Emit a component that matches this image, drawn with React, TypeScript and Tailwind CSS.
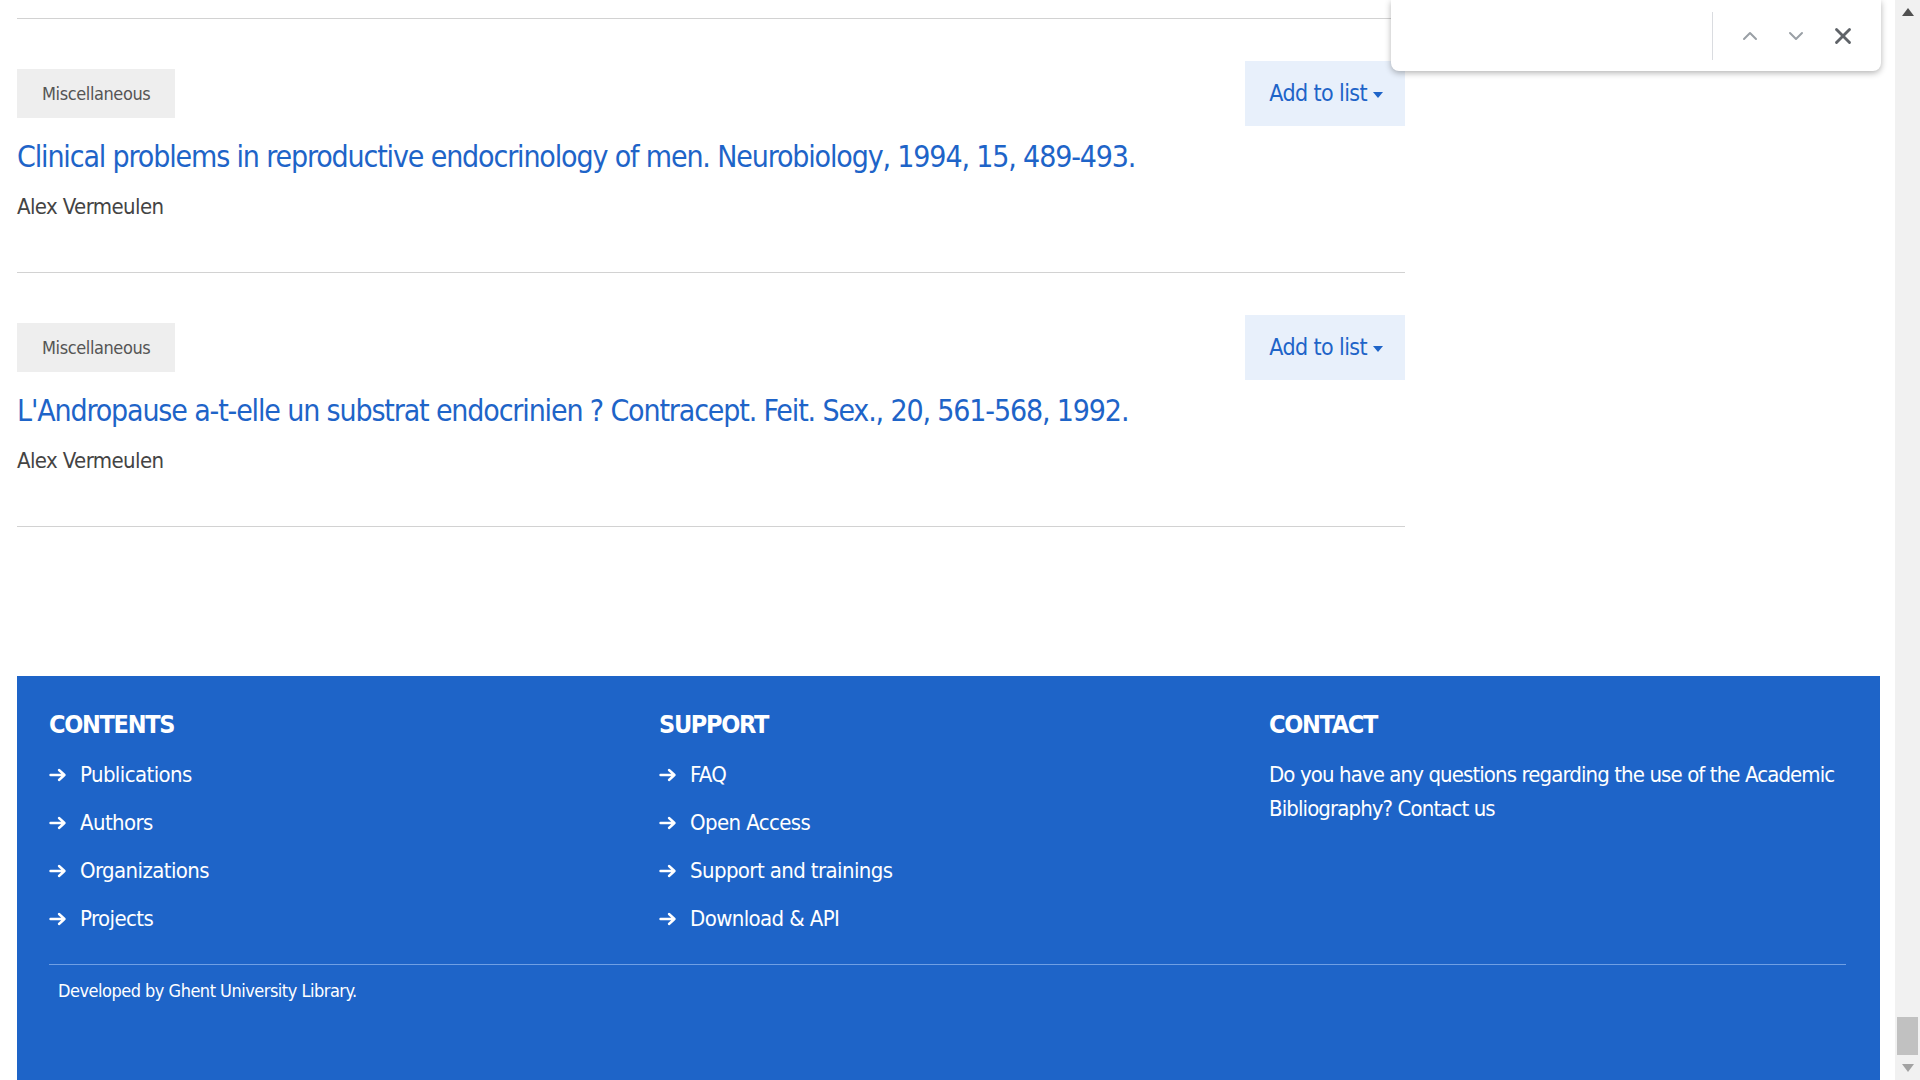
import { ChevronUp, ChevronDown, X } from 'lucide-react';

const FONT = '"DejaVu Sans Condensed", "DejaVu Sans", "Liberation Sans", sans-serif';

type Publication = {
  kind: string;
  title: string;
  author: string;
};

const PUBLICATIONS: Publication[] = [
  {
    kind: 'Miscellaneous',
    title: 'Clinical problems in reproductive endocrinology of men. Neurobiology, 1994, 15, 489-493.',
    author: 'Alex Vermeulen',
  },
  {
    kind: 'Miscellaneous',
    title: "L'Andropause a-t-elle un substrat endocrinien ? Contracept. Feit. Sex., 20, 561-568, 1992.",
    author: 'Alex Vermeulen',
  },
];

const CONTENTS = ['Publications', 'Authors', 'Organizations', 'Projects'];
const SUPPORT = ['FAQ', 'Open Access', 'Support and trainings', 'Download & API'];

function Arrow() {
  return (
    <svg width="18" height="14" viewBox="0 0 18 14" fill="none" className="shrink-0">
      <path d="M1.5 7h14M10 2l5.5 5-5.5 5" stroke="white" strokeWidth="2.4" strokeLinecap="round" strokeLinejoin="round" />
    </svg>
  );
}

function Caret() {
  return (
    <svg width="10" height="6" viewBox="0 0 10 6" className="ml-[6px] mt-[2px]">
      <path d="M0 0h10L5 6z" fill="#1e64c8" />
    </svg>
  );
}

function PublicationItem({ pub }: { pub: Publication }) {
  return (
    <div className="border-b border-[#d2d2d2] pt-[42px] pb-[49px]">
      {/* type + action */}
      <div className="flex items-center justify-between h-[65px]">
        <span className="bg-[#eeeeee] text-[#555555] text-[18px] tracking-[-0.4px] h-[49px] px-[25px] flex items-center">
          {pub.kind}
        </span>
        <button className="bg-[#e8f0fb] text-[#1e64c8] text-[23px] tracking-[-0.6px] h-[65px] pl-[24px] pr-[22px] flex items-center">
          Add to list
          <Caret />
        </button>
      </div>
      <a className="block mt-[11px] text-[30px] leading-[39px] tracking-[-1.15px] text-[#1e64c8]">{pub.title}</a>
      <div className="mt-[14px] text-[22px] leading-[33px] tracking-[-0.6px] text-[#444444]">{pub.author}</div>
    </div>
  );
}

function FooterLinks({ title, items }: { title: string; items: string[] }) {
  return (
    <div>
      <h3 className="text-[25px] leading-[34px] font-bold tracking-[-1.3px]">{title}</h3>
      <ul className="mt-[16px] flex flex-col gap-[14px]">
        {items.map((item) => (
          <li key={item} className="flex items-center gap-[13px] text-[22px] leading-[34px] tracking-[-0.6px]">
            <Arrow />
            <a>{item}</a>
          </li>
        ))}
      </ul>
    </div>
  );
}

function FindBar() {
  return (
    <div className="absolute left-[1391px] top-0 w-[490px] h-[71px] bg-white rounded-b-[8px] shadow-[0_2px_6px_rgba(0,0,0,0.3)] flex items-center">
      <div className="flex-1" />
      <div className="w-px h-[48px] bg-[#dadce0]" />
      <div className="flex items-center gap-[22px] pl-[25px] pr-[25px] text-[#9aa0a6]">
        <ChevronUp size={24} strokeWidth={2} />
        <ChevronDown size={24} strokeWidth={2} />
        <X size={26} strokeWidth={2.6} className="text-[#5f6368]" />
      </div>
    </div>
  );
}

function Scrollbar() {
  return (
    <div className="w-[25px] h-full bg-[#f1f1f1] flex flex-col items-center">
      <svg width="12" height="8" viewBox="0 0 12 8" className="mt-[8px]">
        <path d="M6 0l6 8H0z" fill="#505050" />
      </svg>
      <div className="flex-1" />
      <div className="w-[21px] h-[38px] bg-[#c1c1c1]" />
      <svg width="12" height="8" viewBox="0 0 12 8" className="mt-[9px] mb-[8px]">
        <path d="M0 0h12L6 8z" fill="#a3a3a3" />
      </svg>
    </div>
  );
}

export default function App() {
  return (
    <div className="relative flex h-[1080px] w-full overflow-hidden bg-white" style={{ fontFamily: FONT }}>
      <main className="flex-1 pl-[17px] pr-[15px]">
        {/* tail of previous result */}
        <div className="h-[18px]" />
        <div className="w-[1388px] border-t border-[#d2d2d2]">
          {PUBLICATIONS.map((pub, i) => (
            <PublicationItem key={i} pub={pub} />
          ))}
        </div>

        <footer className="mt-[149px] bg-[#1e64c8] text-white pl-[32px] pr-[34px] pt-[32px] pb-[120px]">
          <div className="grid grid-cols-[610px_610px_1fr]">
            <FooterLinks title="CONTENTS" items={CONTENTS} />
            <FooterLinks title="SUPPORT" items={SUPPORT} />
            <div>
              <h3 className="text-[25px] leading-[34px] font-bold tracking-[-1.3px]">CONTACT</h3>
              <p className="mt-[16px] mr-[-12px] text-[22px] leading-[34px] tracking-[-0.9px]">
                Do you have any questions regarding the use of the Academic Bibliography? <a>Contact us</a>
              </p>
            </div>
          </div>
          <div className="mt-[28px] border-t border-[#6f9fe4]" />
          <p className="mt-[12px] pl-[9px] text-[18px] leading-[28px] tracking-[-0.5px]">
            Developed by <a>Ghent University Library</a>.
          </p>
        </footer>
      </main>
      <Scrollbar />
      <FindBar />
    </div>
  );
}
